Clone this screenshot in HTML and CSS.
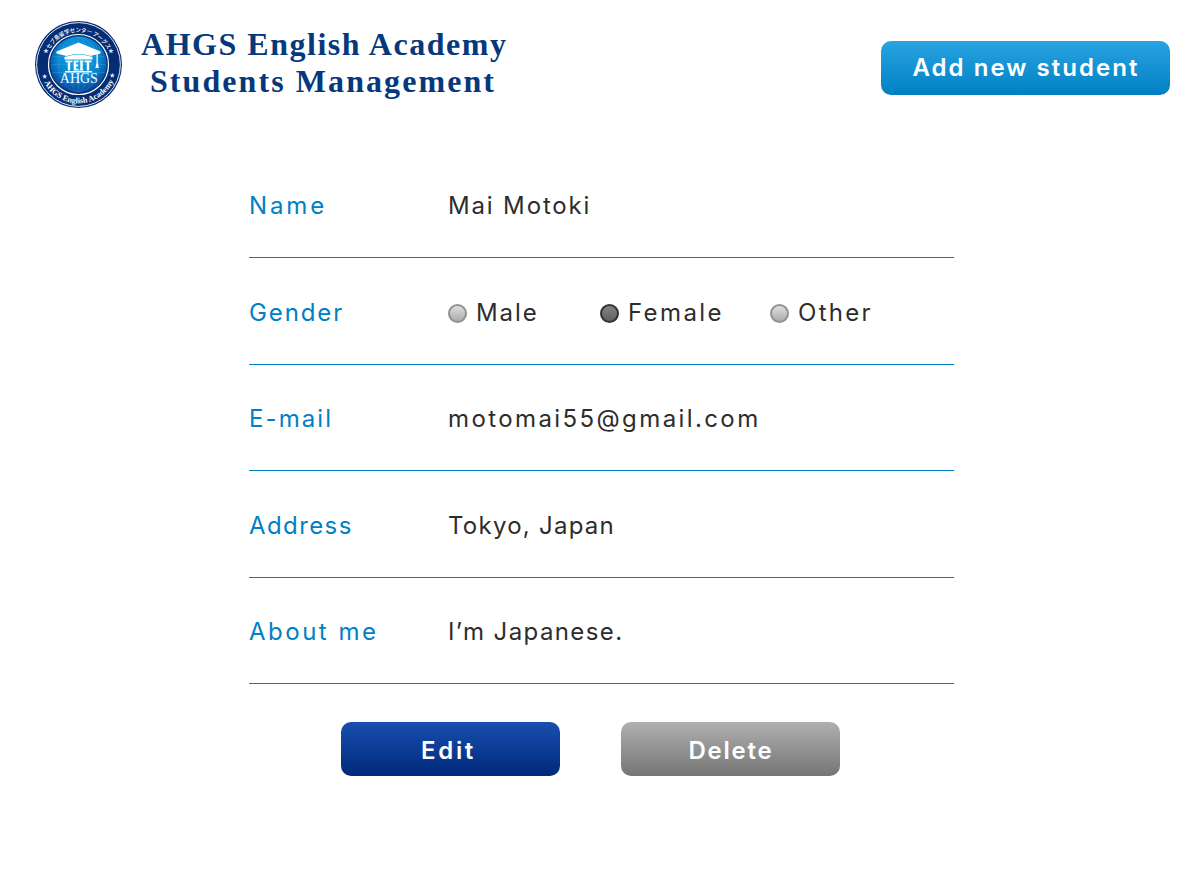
FILE: index.html
```html
<!DOCTYPE html>
<html lang="en">
<head>
<meta charset="utf-8">
<title>AHGS English Academy Students Management</title>
<link rel="stylesheet" href="styles.css">
</head>
<body>
<header class="header">
  <div class="brand">
    <svg class="logo" viewBox="-.5 -.5 89 89" role="img" aria-label="AHGS English Academy">
      <defs>
        <radialGradient id="globe" cx="50%" cy="38%" r="62%">
          <stop offset="0" stop-color="#12aee8"/>
          <stop offset=".6" stop-color="#0a86cf"/>
          <stop offset="1" stop-color="#07419a"/>
        </radialGradient>
        <path id="arcTop" d="M11.500 44a32.500 32.500 0 0 1 65 0"/>
        <path id="arcBottom" d="M5.200 44a38.800 38.800 0 0 0 77.600 0"/>
        <path id="star" fill="#bfeaff" d="M0-2.800L.7-.9 2.700-.8 1.100.4 1.700 2.300 0 1.200-1.700 2.300-1.100.4-2.700-.8-.7-.9z"/>
      </defs>
      <circle cx="44" cy="44" r="43.500" fill="#062c73"/>
      <circle cx="44" cy="44" r="41.900" fill="none" stroke="#fff" stroke-width=".9"/>
      <circle cx="44" cy="44" r="30" fill="#062c73" stroke="#fff" stroke-width="1.200"/>
      <circle cx="44" cy="44" r="28.200" fill="url(#globe)"/>
      <g fill="none" stroke="#4fc3ee" stroke-width=".4" opacity=".6">
        <ellipse cx="44" cy="44" rx="10" ry="27"/>
        <ellipse cx="44" cy="44" rx="20" ry="27"/>
        <path d="M18 36h52M17 44h54M18 52h52M44 17v54"/>
      </g>
      <path fill="#fff" d="M44 22L66 31v2l-10 2.500q-12-4-24 0L22 33v-2z"/>
      <path fill="#fff" d="M30 36.500q14-5 28 0V39H30z"/>
      <path fill="#fff" d="M31 40h7v1.800h-2.300V50h-2.400v-8.200H31zM39.200 40h4.800v1.800h-2.400v2.300h2v1.800h-2v2.300h2.400V50h-4.800zM45.200 40h3.600v1.600h-.6v6.800h.6V50h-3.600v-1.600h.6v-6.800h-.6zM50 40h7v1.800h-2.300V50h-2.400v-8.200H50zM30.500 50.500h27V52h-27z"/>
      <path fill="#fff" d="M62 33.500h1.200v9l1.100 5h-3.400l1.100-5z"/>
      <text class="logo-name" x="44.300" y="62" text-anchor="middle" textLength="38" lengthAdjust="spacingAndGlyphs">AHGS</text>
      <text class="logo-jp"><textPath href="#arcTop" startOffset="15.500" textLength="71" lengthAdjust="spacingAndGlyphs">セブ島留学センター アーグス</textPath></text>
      <text class="logo-en"><textPath href="#arcBottom" startOffset="18.500" textLength="86" lengthAdjust="spacingAndGlyphs">AHGS English Academy</textPath></text>
      <use href="#star" x="11.500" y="30.500"/><use href="#star" x="76.500" y="30.500"/>
      <use href="#star" x="10.200" y="56"/><use href="#star" x="77.800" y="55"/>
    </svg>
    <h1 class="title"><span class="title-top">AHGS English Academy</span><span class="title-bottom">Students Management</span></h1>
  </div>
  <button class="button button-add" type="button">Add new student</button>
</header>
<main class="profile">
  <dl class="fields">
    <div class="row"><dt class="label label-name">Name</dt><dd class="value value-name">Mai Motoki</dd></div>
    <div class="row"><dt class="label label-gender">Gender</dt>
      <dd class="value choices">
        <span class="choice choice-male"><i class="dot"></i>Male</span>
        <span class="choice choice-female"><i class="dot dot-on"></i>Female</span>
        <span class="choice choice-other"><i class="dot"></i>Other</span>
      </dd></div>
    <div class="row"><dt class="label label-email">E-mail</dt><dd class="value value-email">motomai55@gmail.com</dd></div>
    <div class="row"><dt class="label label-address">Address</dt><dd class="value value-address">Tokyo, Japan</dd></div>
    <div class="row"><dt class="label label-about">About me</dt><dd class="value value-about">I’m Japanese.</dd></div>
  </dl>
  <div class="actions">
    <button class="button button-edit" type="button">Edit</button>
    <button class="button button-delete" type="button">Delete</button>
  </div>
</main>
</body>
</html>
```
FILE: styles.css
```css
* { box-sizing: border-box; }
body { margin: 0; background: #fff; color: #2d2d2d; font: 24px/32px Inter, sans-serif; }
.header { display: flex; justify-content: space-between; align-items: flex-start; height: 151.5px; padding: 20px 30px 0 34px; }
.brand { display: flex; }
.logo { width: 89px; height: 89px; flex: none; }
.logo-name { font: 15px "Liberation Serif", serif; fill: #fff; }
.logo-jp { font: 500 5.8px "Noto Sans CJK JP", sans-serif; fill: #fff; }
.logo-en { font: 700 8.2px "Liberation Serif", serif; fill: #fff; }
.title { display: flex; flex-direction: column; margin: 6px 0 0 18px; color: #06397c; font: 700 32px/37px "Liberation Serif", serif; white-space: nowrap; }
.title-top { letter-spacing: 1.52px; }
.title-bottom { margin-left: 9px; letter-spacing: 2.07px; }
.button { height: 54px; padding: 0; border: 0; border-radius: 10px; color: #fff; font: 600 24px/50px Inter, sans-serif; white-space: nowrap; }
.button-add { width: 289px; margin-top: 21px; padding-left: 1px; letter-spacing: 2.05px; background: linear-gradient(#29a3e1, #0080c4); }
.button-edit { width: 219px; padding: 3px 4px 0 0; letter-spacing: 2.7px; background: linear-gradient(#184fb0, #00297a); }
.button-delete { width: 219px; padding: 3px 0 0 1px; letter-spacing: 1.75px; background: linear-gradient(#b0b0b0, #757575); }
.profile { width: 705px; margin-left: 249px; }
.fields { margin: 0; }
.row { display: flex; align-items: center; height: 106.5px; padding-top: 4px; border-bottom: 1px solid #0080c4; }
.label { width: 199px; color: #0080c4; }
.label-name { letter-spacing: 2.9px; }
.label-gender { letter-spacing: 1.9px; }
.label-email { letter-spacing: 2.1px; }
.label-address { letter-spacing: 1.4px; }
.label-about { letter-spacing: 2.5px; }
.value { margin: 0; white-space: nowrap; }
.value-name { letter-spacing: 1.85px; }
.value-email { letter-spacing: 2.4px; }
.value-address { letter-spacing: 1.25px; }
.value-about { letter-spacing: 1.4px; }
.choices { display: flex; }
.choice { display: flex; align-items: center; gap: 9px; }
.choice-male { width: 152px; letter-spacing: 1.9px; }
.choice-female { width: 170px; letter-spacing: 2.4px; }
.choice-other { letter-spacing: 2.3px; }
.dot { width: 19px; height: 19px; margin-top: 1px; border: 2px solid #929292; border-radius: 50%; background: linear-gradient(#dedede, #acacac); }
.dot-on { border-color: #333; background: linear-gradient(#858585, #606060); }
.actions { display: flex; gap: 61px; padding: 38px 0 0 92px; }
```
